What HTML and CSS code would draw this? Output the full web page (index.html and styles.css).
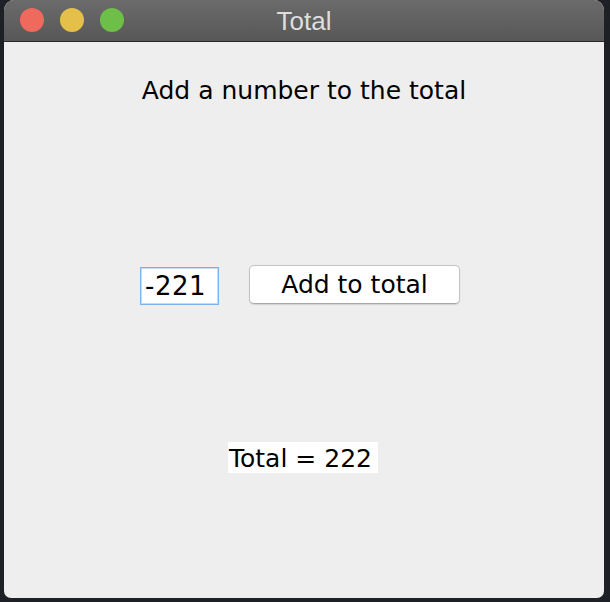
FILE: index.html
```html
<!DOCTYPE html>
<html>
<head>
<meta charset="utf-8">
<link rel="stylesheet" href="styles.css">
<title>Total</title>
</head>
<body>
<div class="window">
  <div class="titlebar">
    <div class="lights">
      <span class="light red"></span>
      <span class="light yellow"></span>
      <span class="light green"></span>
    </div>
    <div class="title">Total</div>
  </div>
  <div class="content">
    <div class="heading">Add a number to the total</div>
    <div class="row">
      <div class="field">-221</div>
      <div class="button">Add to total</div>
    </div>
    <div class="total">Total = 222</div>
  </div>
</div>
</body>
</html>
```
FILE: styles.css
```css
html, body {
  margin: 0;
  padding: 0;
  background: #1d2125;
  width: 610px;
  height: 602px;
  overflow: hidden;
}
body {
  padding-left: 4px;
  box-sizing: border-box;
}
.window {
  width: 600px;
  height: 598px;
  border-radius: 10px 10px 7px 7px;
  overflow: hidden;
  background: #eeeeee;
  display: flex;
  flex-direction: column;
}
.titlebar {
  height: 41px;
  flex: none;
  background: linear-gradient(#6b6b6b, #575757);
  border-bottom: 1px solid #262626;
  position: relative;
  display: flex;
  align-items: center;
  justify-content: center;
}
.lights {
  position: absolute;
  left: 16px;
  top: 8px;
  display: flex;
  gap: 16px;
}
.light {
  width: 24px;
  height: 24px;
  border-radius: 50%;
  display: block;
}
.red { background: #ef695d; }
.yellow { background: #e4c04b; }
.green { background: #6ebf48; }
.title {
  font-family: "Liberation Sans", Arial, sans-serif;
  font-size: 26px;
  color: #dedede;
  line-height: 30px;
}
.content {
  flex: 1;
  display: flex;
  flex-direction: column;
  align-items: center;
  font-family: "DejaVu Sans", "Lucida Grande", sans-serif;
  font-size: 25px;
  color: #000;
}
.heading {
  margin-top: 34px;
  line-height: 30px;
  height: 30px;
}
.row {
  margin-top: 159px;
  display: flex;
  align-items: flex-start;
  gap: 30px;
  margin-right: 8px;
}
.field {
  margin-top: 2px;
  box-sizing: border-box;
  width: 79px;
  height: 38px;
  background: #fff;
  border: 1px solid #7db2ee;
  box-shadow: inset 0 0 0 1px #c4dcf8;
  padding-left: 4px;
  display: flex;
  align-items: center;
  line-height: 29px;
  font-size: 26px;
  letter-spacing: 0.5px;
}
.button {
  box-sizing: border-box;
  width: 211px;
  height: 39px;
  background: #fff;
  border: 1px solid #c3c3c3;
  border-bottom-color: #a9a9a9;
  border-radius: 5px;
  box-shadow: 0 1px 1px rgba(0,0,0,0.12);
  display: flex;
  align-items: center;
  justify-content: center;
  line-height: 29px;
}
.total {
  margin-top: 137px;
  background: #fff;
  width: 150px;
  height: 31px;
  box-sizing: border-box;
  padding: 2px 0 0 1px;
  line-height: 29px;
  margin-right: 2px;
  white-space: nowrap;
}
```
